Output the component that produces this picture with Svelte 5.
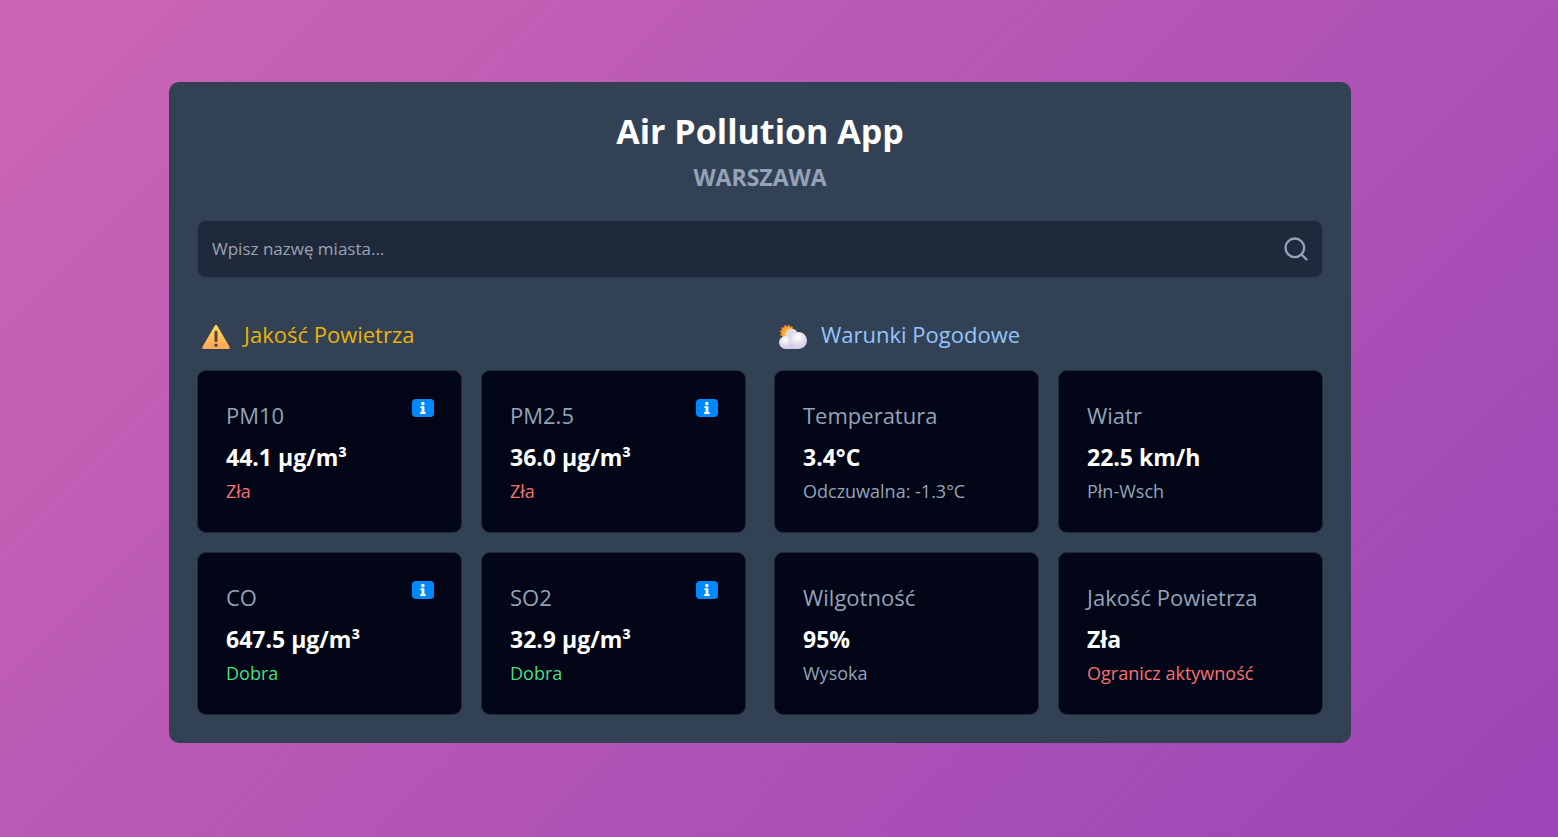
<script>
  let city = $state('');

  const airQuality = [
    { name: 'PM10', value: '44.1 µg/m³', note: 'Zła', tone: 'bad', info: true },
    { name: 'PM2.5', value: '36.0 µg/m³', note: 'Zła', tone: 'bad', info: true },
    { name: 'CO', value: '647.5 µg/m³', note: 'Dobra', tone: 'good', info: true },
    { name: 'SO2', value: '32.9 µg/m³', note: 'Dobra', tone: 'good', info: true }
  ];

  const weather = [
    { name: 'Temperatura', value: '3.4°C', note: 'Odczuwalna: -1.3°C', tone: 'muted' },
    { name: 'Wiatr', value: '22.5 km/h', note: 'Płn-Wsch', tone: 'muted' },
    { name: 'Wilgotność', value: '95%', note: 'Wysoka', tone: 'muted' },
    { name: 'Jakość Powietrza', value: 'Zła', note: 'Ogranicz aktywność', tone: 'bad' }
  ];
</script>

{#snippet card(item)}
  <article class="card">
    <div class="card-head">
      <h3>{item.name}</h3>
      {#if item.info}
        <button class="info" type="button" aria-label="Informacje: {item.name}">
          <svg width="22" height="18" viewBox="0 0 22 18" aria-hidden="true">
            <rect width="22" height="18" rx="4" fill="#0088ff" />
            <circle cx="10.8" cy="4.6" r="1.8" fill="#fff" />
            <path d="M8.400 7.300h4v5.800h1.200v1.800H8.200v-1.800h1.400V9H8.400z" fill="#fff" />
          </svg>
        </button>
      {/if}
    </div>
    <p class="value">{item.value}</p>
    <p class="note {item.tone}">{item.note}</p>
  </article>
{/snippet}

<main class="page">
  <div class="panel">
    <header>
      <h1>Air Pollution App</h1>
      <p class="city">WARSZAWA</p>
    </header>

    <form class="search" onsubmit={(e) => e.preventDefault()}>
      <input type="text" placeholder="Wpisz nazwę miasta..." aria-label="Nazwa miasta" bind:value={city} />
      <button type="submit" aria-label="Szukaj">
        <svg width="28" height="28" viewBox="0 0 24 24" fill="none" stroke="#94a3b8" stroke-width="2" stroke-linecap="round" stroke-linejoin="round" aria-hidden="true">
          <circle cx="11" cy="11" r="8" />
          <path d="m21 21-4.300-4.300" />
        </svg>
      </button>
    </form>

    <div class="columns">
      <section>
        <h2 class="air">
          <svg width="28" height="28" viewBox="0 0 28 28" aria-hidden="true">
            <defs>
              <linearGradient id="warn" x1="0" y1="0" x2="0" y2="1">
                <stop offset="0" stop-color="#ffd85c" />
                <stop offset="1" stop-color="#ffa557" />
              </linearGradient>
            </defs>
            <path d="M12.600 2.900Q14 .7 15.400 2.900L27.500 23.800Q28.500 26 26.200 26H1.800Q-.5 26 .5 23.800z" fill="url(#warn)" />
            <path d="M14 9v8.500" stroke="#5a463f" stroke-width="3" stroke-linecap="round" />
            <circle cx="14" cy="22.200" r="1.700" fill="#5a463f" />
          </svg>
          Jakość Powietrza
        </h2>
        <div class="grid">
          {#each airQuality as item}
            {@render card(item)}
          {/each}
        </div>
      </section>

      <section>
        <h2 class="weather">
          <svg width="28" height="28" viewBox="0 0 28 28" aria-hidden="true">
            <defs>
              <radialGradient id="sun" cx=".6" cy=".6" r=".6">
                <stop offset="0" stop-color="#ffcb3c" />
                <stop offset="1" stop-color="#f9a02c" />
              </radialGradient>
              <radialGradient id="puff" cx=".45" cy=".3" r=".75">
                <stop offset="0" stop-color="#ffffff" />
                <stop offset=".5" stop-color="#e4e0e8" />
                <stop offset="1" stop-color="#cfc3f5" />
              </radialGradient>
            </defs>
            <circle cx="8.500" cy="9.500" r="6.800" fill="none" stroke="#f58220" stroke-width="1.800" stroke-dasharray="2 1.560" />
            <circle cx="8.500" cy="9.500" r="6.300" fill="url(#sun)" />
            <circle cx="12.500" cy="11.500" r="6" fill="#dedce0" />
            <path d="M6 14h14v12H6z" fill="#d3caf0" />
            <circle cx="6.500" cy="19.500" r="6.500" fill="url(#puff)" />
            <circle cx="19.500" cy="17.500" r="8.500" fill="url(#puff)" />
          </svg>
          Warunki Pogodowe
        </h2>
        <div class="grid">
          {#each weather as item}
            {@render card(item)}
          {/each}
        </div>
      </section>
    </div>
  </div>
</main>

<style>
  :global(body) {
    margin: 0;
  }

  .page {
    box-sizing: border-box;
    min-height: 100vh;
    padding: 82px 207px 94px 169px;
    background: linear-gradient(135deg, #cc66b4, #9b45b7);
    font-family: 'Segoe UI', 'Open Sans', 'Noto Sans', sans-serif;
    color: #fff;
  }

  h1, h2, h3, p {
    margin: 0;
  }

  .panel {
    padding: 28px;
    border-radius: 10px;
    background: #334155;
  }

  header {
    text-align: center;
  }

  h1 {
    font-size: 34px;
    line-height: 43px;
    font-weight: 700;
  }

  .city {
    margin-top: 8px;
    font-size: 23px;
    line-height: 32px;
    font-weight: 700;
    color: #94a3b8;
  }

  .search {
    display: flex;
    align-items: center;
    margin-top: 27px;
    padding: 14px 12px 14px 14px;
    border: 1px solid #2f3d51;
    border-radius: 9px;
    background: #1e293b;
  }

  .search input {
    flex: 1;
    min-width: 0;
    padding: 0;
    border: 0;
    outline: 0;
    background: none;
    color: #fff;
    font: inherit;
    font-size: 17px;
    line-height: 28px;
  }

  .search input::placeholder {
    color: #9ca3af;
    opacity: 1;
  }

  button {
    display: flex;
    padding: 0;
    border: 0;
    background: none;
    cursor: pointer;
  }

  .columns {
    display: grid;
    grid-template-columns: 1fr 1fr;
    gap: 28px;
    margin-top: 39px;
  }

  h2 {
    display: flex;
    align-items: center;
    gap: 14px;
    padding-left: 5px;
    font-size: 22px;
    line-height: 34px;
    font-weight: 400;
  }

  h2 svg {
    margin-top: 6px;
  }

  .air {
    color: #eab308;
  }

  .weather {
    color: #93c5fd;
  }

  .grid {
    display: grid;
    grid-template-columns: 1fr 1fr;
    gap: 19px;
    margin-top: 19px;
  }

  .card {
    padding: 27px 27px 24px 28px;
    border: 1px solid #1e293b;
    border-radius: 9px;
    background: #020617;
  }

  .card-head {
    display: flex;
    align-items: flex-start;
    justify-content: space-between;
  }

  .info {
    margin-top: 1px;
  }

  h3 {
    font-size: 22px;
    line-height: 34px;
    font-weight: 400;
    color: #94a3b8;
  }

  .value {
    margin-top: 8px;
    font-size: 23px;
    line-height: 34px;
    font-weight: 700;
  }

  .note {
    font-size: 18px;
    line-height: 34px;
  }

  .muted {
    color: #94a3b8;
  }

  .bad {
    color: #f87171;
  }

  .good {
    color: #4ade80;
  }
</style>
